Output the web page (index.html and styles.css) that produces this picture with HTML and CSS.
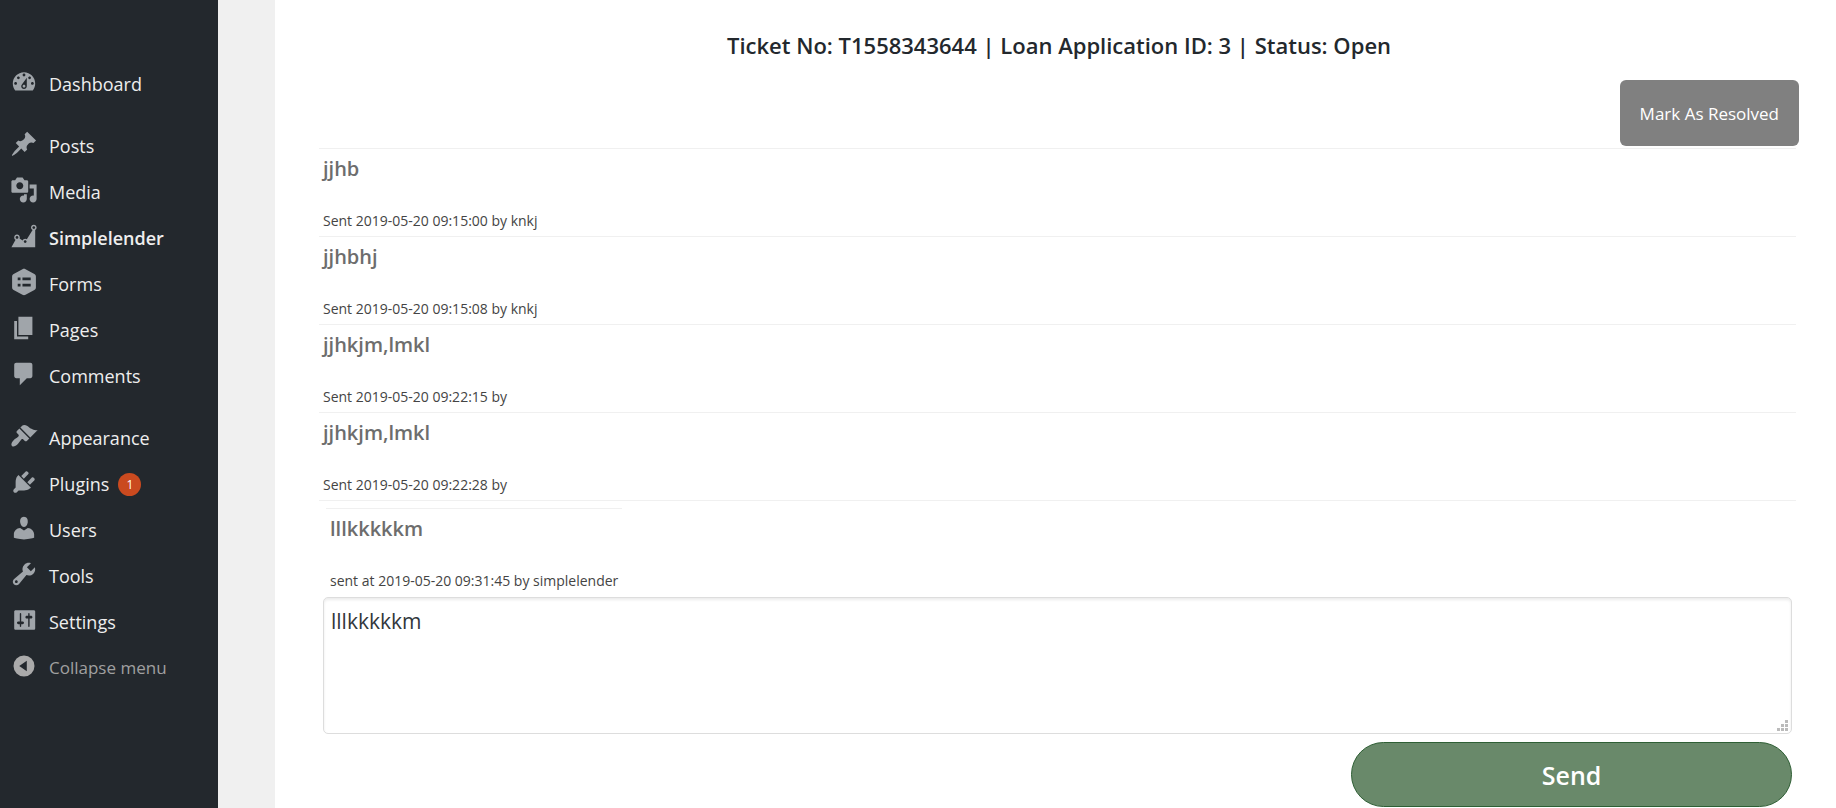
FILE: index.html
```html
<!DOCTYPE html>
<html lang="en">
<head>
<meta charset="utf-8">
<title>Simplelender – Ticket T1558343644</title>
<link rel="stylesheet" href="styles.css">
</head>
<body>
<div class="layout">
  <nav class="sidebar" aria-label="Main menu">
    <ul class="menu">
      <li><a class="menu-link" href="#"><svg class="icon" viewBox="0 0 20 20"><path d="M3.76 16h12.48c1.1-1.37 1.76-3.11 1.76-5 0-4.42-3.58-8-8-8s-8 3.58-8 8c0 1.89.66 3.63 1.76 5zM10 4c.55 0 1 .45 1 1s-.45 1-1 1-1-.45-1-1 .45-1 1-1zM6 6c.55 0 1 .45 1 1s-.45 1-1 1-1-.45-1-1 .45-1 1-1zm8 0c.55 0 1 .45 1 1s-.45 1-1 1-1-.45-1-1 .45-1 1-1zm-5.37 5.55L12 7v6c0 1.1-.9 2-2 2s-2-.9-2-2c0-.57.24-1.08.63-1.45zM4 10c.55 0 1 .45 1 1s-.45 1-1 1-1-.45-1-1 .45-1 1-1zm12 0c.55 0 1 .45 1 1s-.45 1-1 1-1-.45-1-1 .45-1 1-1zm-5 3c0-.55-.45-1-1-1s-1 .45-1 1 .45 1 1 1 1-.45 1-1z"/></svg>Dashboard</a></li>
      <li class="group-start"><a class="menu-link" href="#"><svg class="icon" viewBox="0 0 20 20"><path d="M10.44 3.02l1.82-1.82 6.36 6.35-1.83 1.82c-1.05-.68-2.48-.57-3.41.36l-.75.75c-.92.93-1.04 2.35-.35 3.41l-1.83 1.82-2.41-2.41-2.8 2.79c-.42.42-3.38 2.71-3.8 2.29s1.86-3.39 2.28-3.81l2.79-2.79L4.1 9.36l1.83-1.82c1.05.69 2.48.57 3.4-.36l.75-.75c.93-.92 1.05-2.35.36-3.41z"/></svg>Posts</a></li>
      <li><a class="menu-link" href="#"><svg class="icon" viewBox="0 0 20 20"><path d="M13 11V4c0-.55-.45-1-1-1h-1.67L9 1H5L3.67 3H2c-.55 0-1 .45-1 1v7c0 .55.45 1 1 1h10c.55 0 1-.45 1-1zM7 4.5c1.38 0 2.5 1.12 2.5 2.5S8.38 9.5 7 9.5 4.5 8.38 4.5 7 5.62 4.5 7 4.5zM14 6h5v10.5c0 1.38-1.12 2.5-2.5 2.5S14 17.88 14 16.5s1.12-2.5 2.5-2.5c.17 0 .34.02.5.05V9h-3V6zm-4 8.05V13h2v3.5c0 1.38-1.12 2.5-2.5 2.5S7 17.88 7 16.5 8.12 14 9.5 14c.17 0 .34.02.5.05z"/></svg>Media</a></li>
      <li><a class="menu-link current" href="#" aria-current="page"><svg class="icon" viewBox="0 0 20 20"><path d="M18 18l.01-12.28c.59-.35.99-.99.99-1.72 0-1.1-.9-2-2-2s-2 .9-2 2c0 .8.47 1.48 1.14 1.8l-4.13 6.58c-.33-.24-.73-.38-1.16-.38-.84 0-1.55.51-1.85 1.24l-2.14-1.53c.09-.22.14-.46.14-.71 0-1.11-.89-2-2-2-1.1 0-2 .89-2 2 0 .73.4 1.36.98 1.71L1 18h17zM17 3c.55 0 1 .45 1 1s-.45 1-1 1-1-.45-1-1 .45-1 1-1zM5 10c.55 0 1 .45 1 1s-.45 1-1 1-1-.45-1-1 .45-1 1-1zm5.85 3c.55 0 1 .45 1 1s-.45 1-1 1-1-.45-1-1 .45-1 1-1z"/></svg>Simplelender</a></li>
      <li><a class="menu-link" href="#"><svg class="icon" viewBox="0 0 20 20"><path fill-rule="evenodd" d="M8.900.9c.7-.4 1.500-.4 2.200 0l6.300 3.300c.7.4 1.100 1 1.100 1.800v8c0 .8-.4 1.400-1.100 1.800l-6.300 3.300c-.7.4-1.500.4-2.200 0l-6.300-3.300c-.7-.4-1.100-1-1.100-1.800V6c0-.8.4-1.400 1.100-1.800zM5.500 6.800v1.900h2V6.800zm3.400 0v1.900h5.900V6.800zM5.500 11.300v1.900h2v-1.900zm3.400 0v1.900h5.900v-1.900z"/></svg>Forms</a></li>
      <li><a class="menu-link" href="#"><svg class="icon" viewBox="0 0 20 20"><path d="M6 15V2h10v13H6zm-1 1h8v2H3V5h2v11z"/></svg>Pages</a></li>
      <li><a class="menu-link" href="#"><svg class="icon" viewBox="0 0 20 20"><path d="M4.500 2h10c.9 0 1.500.6 1.500 1.500v8c0 .9-.6 1.500-1.500 1.500H12l-5 5v-5H4.500c-.9 0-1.500-.6-1.500-1.500v-8C3 2.600 3.600 2 4.500 2z"/></svg>Comments</a></li>
      <li class="group-start"><a class="menu-link" href="#"><svg class="icon" viewBox="0 0 20 20"><path d="M14.48 11.06L7.41 3.99l1.5-1.5c.5-.56 2.3-.47 3.51.32 1.21.8 1.43 1.28 2.91 2.1 1.18.64 2.45 1.26 4.45.85zm-.71.71L6.7 4.7 4.93 6.47c-.39.39-.39 1.02 0 1.41l1.06 1.06c.39.39.39 1.03 0 1.42-.6.6-1.43 1.11-2.21 1.69-.35.26-.7.53-1.01.84C1.43 14.23.4 16.08 1.4 17.07c.99 1 2.84-.03 4.18-1.36.31-.31.58-.66.85-1.02.57-.78 1.08-1.61 1.69-2.21.39-.39 1.02-.39 1.41 0l1.06 1.06c.39.39 1.02.39 1.41 0z"/></svg>Appearance</a></li>
      <li><a class="menu-link" href="#"><svg class="icon" viewBox="0 0 20 20"><path d="M13.11 4.36L9.87 7.6 8 5.73l3.24-3.24c.35-.34 1.05-.2 1.56.32.52.51.66 1.21.31 1.55zm-8 1.77l.91-1.12 9.01 9.01-1.19.84c-.71.71-2.63 1.16-3.82 1.16H6.14L4.9 17.26c-.59.59-1.54.59-2.12 0-.59-.58-.59-1.53 0-2.12l1.24-1.24v-3.88c0-1.13.4-3.19 1.09-3.89zm7.26 3.97l3.24-3.24c.34-.35 1.04-.21 1.55.31.52.51.66 1.21.31 1.55l-3.24 3.25z"/></svg>Plugins<span class="badge">1</span></a></li>
      <li><a class="menu-link" href="#"><svg class="icon" viewBox="0 0 20 20"><path d="M10 9.25c-2.27 0-2.73-3.44-2.73-3.44C7 4.02 7.82 2 9.97 2c2.16 0 2.98 2.02 2.71 3.81 0 0-.41 3.44-2.68 3.44zm0 2.57L12.72 10c2.39 0 4.52 2.33 4.52 4.53v2.49s-3.65 1.13-7.24 1.13c-3.65 0-7.24-1.13-7.24-1.13v-2.49c0-2.25 1.94-4.48 4.47-4.48z"/></svg>Users</a></li>
      <li><a class="menu-link" href="#"><svg class="icon" viewBox="0 0 20 20"><path d="M16.68 9.77c-1.34 1.34-3.3 1.67-4.95.99l-5.41 6.52c-.99.99-2.59.99-3.58 0s-.99-2.59 0-3.57l6.52-5.42c-.68-1.65-.35-3.61.99-4.95 1.28-1.28 3.12-1.62 4.72-1.06l-2.89 2.89 2.82 2.82 2.86-2.87c.53 1.58.18 3.39-1.08 4.65zM3.81 16.21c.4.39 1.04.39 1.43 0 .4-.4.4-1.04 0-1.43-.39-.4-1.03-.4-1.43 0-.39.39-.39 1.03 0 1.43z"/></svg>Tools</a></li>
      <li><a class="menu-link" href="#"><svg class="icon" viewBox="0 0 20 20"><path d="M18 16V4c0-.55-.45-1-1-1H4c-.55 0-1 .45-1 1v12c0 .55.45 1 1 1h13c.55 0 1-.45 1-1zM8 11h1c.55 0 1 .45 1 1s-.45 1-1 1H8v1.500c0 .28-.22.5-.5.5s-.5-.22-.5-.5V13H6c-.55 0-1-.45-1-1s.45-1 1-1h1V5.500c0-.28.22-.5.5-.5s.5.22.5.5V11zm5-2h-1c-.55 0-1-.45-1-1s.45-1 1-1h1V5.500c0-.28.22-.5.5-.5s.5.22.5.5V7h1c.55 0 1 .45 1 1s-.45 1-1 1h-1v5.500c0 .28-.22.5-.5.5s-.5-.22-.5-.5V9z"/></svg>Settings</a></li>
      <li><button class="menu-link collapse" type="button"><svg class="icon" viewBox="0 0 20 20"><path fill-rule="evenodd" d="M10 2.500a7.500 7.500 0 1 1 0 15 7.500 7.500 0 0 1 0-15zM12 6.200v7.600L6.600 10z"/></svg>Collapse menu</button></li>
    </ul>
  </nav>
  <main class="panel">
    <h1 class="title">Ticket No: T1558343644 | Loan Application ID: 3 | Status: Open</h1>
    <div class="actions"><button class="resolve" type="button">Mark As Resolved</button></div>
    <section class="thread" aria-label="Messages">
      <article class="message"><h2 class="message-text">jjhb</h2><p class="message-meta">Sent 2019-05-20 09:15:00 by knkj</p></article>
      <article class="message"><h2 class="message-text">jjhbhj</h2><p class="message-meta">Sent 2019-05-20 09:15:08 by knkj</p></article>
      <article class="message"><h2 class="message-text">jjhkjm,lmkl</h2><p class="message-meta">Sent 2019-05-20 09:22:15 by</p></article>
      <article class="message"><h2 class="message-text">jjhkjm,lmkl</h2><p class="message-meta">Sent 2019-05-20 09:22:28 by</p></article>
      <div class="reply">
        <article class="message latest"><h2 class="message-text">lllkkkkkm</h2><p class="message-meta">sent at 2019-05-20 09:31:45 by simplelender</p></article>
        <form class="reply-form">
          <textarea class="reply-box" aria-label="Reply message">lllkkkkkm</textarea>
          <button class="send" type="button">Send</button>
        </form>
      </div>
    </section>
  </main>
</div>
</body>
</html>
```
FILE: styles.css
```css
* { box-sizing: border-box; }

body {
  margin: 0;
  background: #f0f0f0;
  color: #23282d;
  font-family: "Segoe UI", "Open Sans", "Noto Sans", sans-serif;
}

h1, h2, p, ul { margin: 0; padding: 0; }

button, textarea { font-family: inherit; }

.layout {
  display: flex;
  min-height: 100vh;
}

/* Sidebar */
.sidebar {
  flex: 0 0 218px;
  padding-top: 61px;
  background: #23282d;
}

.menu { list-style: none; }

.group-start { margin-top: 16px; }

.menu-link {
  display: flex;
  align-items: center;
  gap: 11px;
  width: 100%;
  height: 46px;
  padding: 0 0 0 10px;
  border: 0;
  background: none;
  color: #eee;
  font-size: 18px;
  line-height: 24px;
  text-align: left;
  text-decoration: none;
}

.menu-link.current { font-weight: 600; }

.menu-link.collapse {
  color: #a0a0a0;
  font-size: 17px;
}

.icon {
  flex: none;
  width: 28px;
  height: 28px;
  margin-bottom: 4px;
  fill: #a0a5aa;
}

.collapse .icon { fill: #aaa; }

.badge {
  width: 23px;
  height: 23px;
  margin-left: -2px;
  border-radius: 50%;
  background: #ca4a1f;
  color: #fff;
  font-size: 12px;
  line-height: 23px;
  text-align: center;
}

/* Ticket panel */
.panel {
  flex: 1;
  margin-left: 57px;
  padding: 29px 37px 0 44px;
  background: #fff;
}

.title {
  font-size: 22px;
  font-weight: 600;
  line-height: 32px;
  text-align: center;
}

.actions {
  display: flex;
  justify-content: flex-end;
  padding-top: 19px;
}

.resolve {
  height: 66px;
  padding: 0 20px;
  border: 0;
  border-radius: 6px;
  background: #808080;
  color: #fff;
  font-size: 17px;
}

.thread { margin: 2px 3px 0 0; }

.message {
  height: 88px;
  padding: 4px 4px 0;
  border-top: 1px solid #f0f0f0;
}

.message-text {
  color: #6d6d6d;
  font-size: 20px;
  font-weight: 600;
  line-height: 32px;
}

.message-meta {
  margin-top: 26px;
  color: #444;
  font-size: 14px;
  line-height: 20px;
}

.reply {
  padding: 7px 4px 0;
  border-top: 1px solid #f0f0f0;
}

.latest {
  width: fit-content;
  margin: 0 0 1px 3px;
}

.reply-form {
  display: flex;
  flex-direction: column;
  gap: 8px;
}

.reply-box {
  display: block;
  width: 100%;
  height: 137px;
  padding: 7px;
  border: 1px solid #ddd;
  border-radius: 5px;
  background: #fff;
  box-shadow: inset 0 2px 3px rgba(0, 0, 0, 0.08);
  color: #32373c;
  font-size: 21px;
  line-height: 32px;
  resize: both;
}

.reply-box::-webkit-resizer {
  background: url("data:image/svg+xml,%3Csvg xmlns='http://www.w3.org/2000/svg' width='15' height='15' fill='%23bbb'%3E%3Cpath d='M9 2h3v3H9zM5 6h3v3H5zM9 6h3v3H9zM1 10h3v3H1zM5 10h3v3H5zM9 10h3v3H9z'/%3E%3C/svg%3E") no-repeat;
}

.send {
  align-self: flex-end;
  width: 30%;
  height: 65px;
  border: 1px solid #2f5f35;
  border-radius: 33px;
  background: #69896a;
  color: #fff;
  font-size: 25px;
  font-weight: 600;
}
```
